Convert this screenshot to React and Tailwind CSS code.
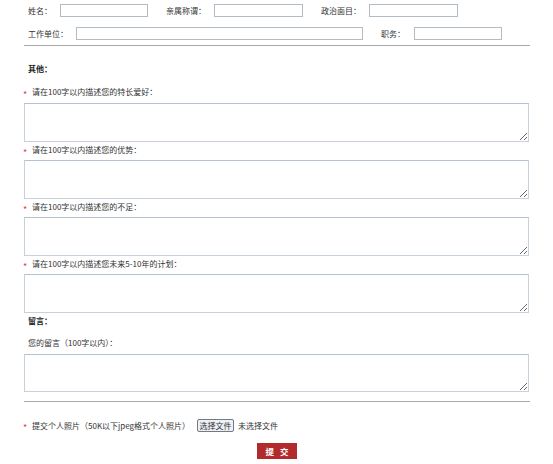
import React from "react";

const font = { fontFamily: '"Noto Sans CJK SC", "Noto Sans", sans-serif' };

function Inp({ w }) {
  return (
    <input
      type="text"
      className={`h-[13px] border border-[#b3bcc5] bg-white outline-none p-0 ${w}`}
    />
  );
}

function Area({ h = "h-[39px]", mt = "mt-[4px]" }) {
  return (
    <textarea
      className={`block ml-[24px] w-[505px] ${h} ${mt} border border-[#c6d1db] border-t-[#b6c2cd] bg-white outline-none p-0 resize`}
    />
  );
}

function Star() {
  return (
    <span className="w-[8px] ml-[23px] text-[#e0403f] text-[9px] leading-none translate-y-[2px]">*</span>
  );
}

function Req({ text, mt }) {
  return (
    <div className={`flex items-center h-[12px] ${mt} text-[8px] leading-[12px] text-[#333]`}>
      <Star />
      <span className="ml-[1px]">{text}</span>
    </div>
  );
}

export default function App() {
  return (
    <div className="relative w-[553px] h-[464px] bg-white text-[#333] overflow-hidden" style={font}>
      {/* row 1 */}
      <div className="flex items-center h-[13px] mt-[4px] text-[8px]">
        <span className="ml-[28px] w-[32px]">姓名：</span>
        <Inp w="w-[88px]" />
        <span className="ml-[18px] w-[48px]">亲属称谓：</span>
        <Inp w="w-[89px]" />
        <span className="ml-[18px] w-[48px]">政治面目：</span>
        <Inp w="w-[89px]" />
      </div>
      {/* row 2 */}
      <div className="flex items-center h-[13px] mt-[10px] text-[8px]">
        <span className="ml-[28px] w-[48px]">工作单位：</span>
        <Inp w="w-[287px]" />
        <span className="ml-[18px] w-[33px]">职务：</span>
        <Inp w="w-[88px]" />
      </div>
      <div className="ml-[24px] w-[506px] h-px bg-[#a8a8a8] mt-[5px]" />

      <div className="ml-[28px] mt-[17px] h-[12px] leading-[12px] text-[8px] font-bold text-[#222]">其他：</div>

      <Req text="请在100字以内描述您的特长爱好：" mt="mt-[11px]" />
      <Area mt="mt-[5px]" />
      <Req text="请在100字以内描述您的优势：" mt="mt-[2px]" />
      <Area />
      <Req text="请在100字以内描述您的不足：" mt="mt-[2px]" />
      <Area />
      <Req text="请在100字以内描述您未来5-10年的计划：" mt="mt-[2px]" />
      <Area />

      <div className="ml-[28px] mt-[2px] h-[12px] leading-[12px] text-[8px] font-bold text-[#222]">留言：</div>
      <div className="ml-[28px] mt-[10px] h-[12px] leading-[12px] text-[8px]">您的留言（100字以内）：</div>
      <Area h="h-[38px]" mt="mt-[5px]" />
      <div className="ml-[24px] w-[506px] h-px bg-[#a8a8a8] mt-[9px]" />

      <div className="flex items-center h-[13px] mt-[17px] text-[8px]">
        <Star />
        <span className="ml-[1px] w-[165px] whitespace-nowrap">提交个人照片（50K以下jpeg格式个人照片）</span>
        <span className="h-[13px] w-[37px] flex items-center justify-center border border-[#6f7b88] rounded-[2px] bg-[#eef0f3] text-[8px] leading-none">选择文件</span>
        <span className="ml-[4px]">未选择文件</span>
      </div>

      <div className="ml-[257px] mt-[11px] w-[40px] h-[16px] bg-[#b22a2c] text-white text-[8.5px] font-bold flex items-center justify-center tracking-[2px] pl-[2px]">
        提 交
      </div>
    </div>
  );
}
